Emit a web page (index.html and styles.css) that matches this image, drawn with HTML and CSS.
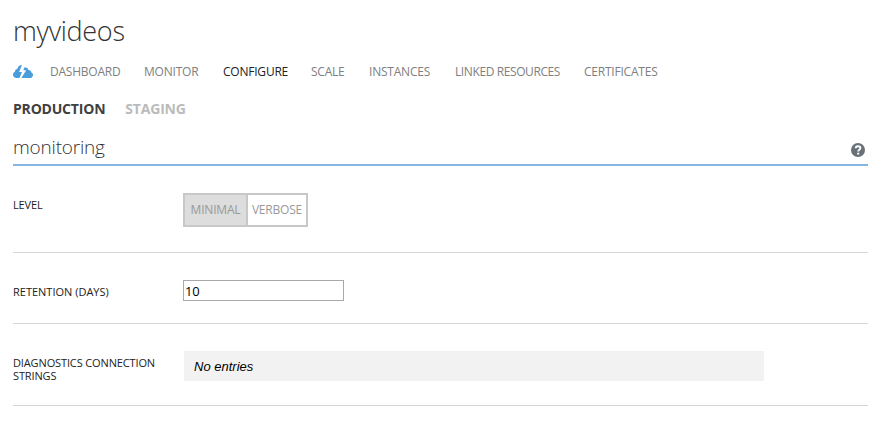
FILE: index.html
```
<!DOCTYPE html>
<html lang="en">
<head>
<meta charset="utf-8">
<title>myvideos</title>
<link rel="stylesheet" href="styles.css">
</head>
<body>
<main class="page">
  <h1 class="title">myvideos</h1>
  <nav class="nav">
    <svg class="cloud" viewBox="0 0 20 14" aria-hidden="true">
      <path fill="#4a9ddb" d="M4 13C1.600 13 0 11.700 0 9.700 0 8.300.8 7.200 2 6.800 1.900 5.200 2.900 4.200 4.300 4 4.900 1.500 6.700 0 9 0L6.100 7h2.900L6.500 13zM8.400 13l4.800-7.800h-2.900L11.600 2.200C13.500 2.200 15.200 3.300 15.500 5c1.800.1 2.900 1.100 2.800 2.500 1.200.4 1.800 1.200 1.700 2.400C19.900 11.900 18.600 13 16.700 13z"/>
    </svg>
    <a>DASHBOARD</a>
    <a>MONITOR</a>
    <a class="current">CONFIGURE</a>
    <a>SCALE</a>
    <a>INSTANCES</a>
    <a class="linked">LINKED RESOURCES</a>
    <a>CERTIFICATES</a>
  </nav>
  <div class="tabs">
    <span class="tab active">PRODUCTION</span>
    <span class="tab">STAGING</span>
  </div>
  <header class="section">
    <h2>monitoring</h2>
    <svg class="help" viewBox="0 0 14 14" aria-hidden="true">
      <circle cx="7" cy="7" r="7" fill="#697078"/>
      <path d="M4.700 5.300C4.700 3.900 5.700 3.200 7 3.200s2.400.7 2.400 1.900C9.400 6.600 7.200 6.700 7.200 8.600" fill="none" stroke="#fff" stroke-width="1.900"/>
      <path d="M6.200 9.700h2v1.900h-2z" fill="#fff"/>
    </svg>
  </header>
  <section class="row level">
    <div class="label">LEVEL</div>
    <div class="segmented"><span class="selected">MINIMAL</span><span>VERBOSE</span></div>
  </section>
  <section class="row retention">
    <label class="label" for="days">RETENTION (DAYS)</label>
    <input id="days" class="days" value="10">
  </section>
  <section class="row diagnostics">
    <div class="label">DIAGNOSTICS CONNECTION STRINGS</div>
    <div class="entries">No entries</div>
  </section>
</main>
</body>
</html>
```
FILE: styles.css
```
* { box-sizing: border-box; }
body {
  margin: 0;
  background: #fff;
  color: #333;
  font-family: "Open Sans", "Noto Sans", sans-serif;
}
.page { padding: 12px 25px 0 13px; }
.title {
  margin: 0;
  height: 48px;
  font-size: 27px;
  line-height: 38px;
  font-weight: 300;
  letter-spacing: -0.3px;
}
.nav {
  display: grid;
  grid-template-columns: 37px 94px 79px 88px 58px 86px 129px auto;
  height: 24px;
  align-items: center;
  font-size: 12px;
  letter-spacing: -0.22px;
  color: #808080;
  white-space: nowrap;
}
.nav a { padding-bottom: 2px; }
.nav .linked { letter-spacing: -0.4px; }
.nav .current { color: #222; }
.cloud { width: 20px; height: 14px; }
.tabs {
  display: flex;
  gap: 20px;
  margin-top: 14px;
  height: 22px;
  line-height: 22px;
  font-size: 14px;
  font-weight: 700;
  letter-spacing: -0.2px;
  color: #bbb;
}
.active { color: #404040; }
.section {
  display: flex;
  justify-content: space-between;
  height: 46px;
  padding: 13px 3px 0 0;
  border-bottom: 2px solid #84b7e4;
}
.section h2 {
  margin: 0;
  font-size: 19px;
  line-height: 28px;
  font-weight: 300;
  letter-spacing: -0.2px;
}
.help { width: 14px; height: 14px; margin-top: 10px; }
.row {
  display: grid;
  grid-template-columns: 170px 1fr;
  align-items: start;
  border-bottom: 1px solid #d6d6d6;
}
.label {
  margin-top: 5px;
  font-size: 11px;
  line-height: 13px;
  letter-spacing: -0.13px;
  color: #222;
}
.retention .label { letter-spacing: 0; }
.level { height: 87px; padding-top: 27px; }
.segmented {
  display: flex;
  width: 125px;
  height: 34px;
  border: 2px solid #c8c8c8;
  font-size: 12px;
  line-height: 30px;
  letter-spacing: -0.2px;
  color: #999;
  text-align: center;
}
.segmented span { flex: 1; }
.segmented .selected {
  flex: 0 0 63px;
  background: #ddd;
  border-right: 2px solid #c8c8c8;
}
.retention { height: 71px; padding-top: 27px; }
.days {
  width: 161px;
  height: 21px;
  padding: 1px 1px 0;
  border: 1px solid #a9a9ad;
  font: 13px "Open Sans", "Noto Sans", sans-serif;
  letter-spacing: -0.3px;
  color: #000;
}
.diagnostics { height: 82px; padding-top: 27px; }
.entries {
  width: 580px;
  height: 30px;
  margin-left: 1px;
  padding-left: 10px;
  background: #f2f2f2;
  font: italic 13px/32px "Liberation Sans", Arial, sans-serif;
  color: #000;
}
```
